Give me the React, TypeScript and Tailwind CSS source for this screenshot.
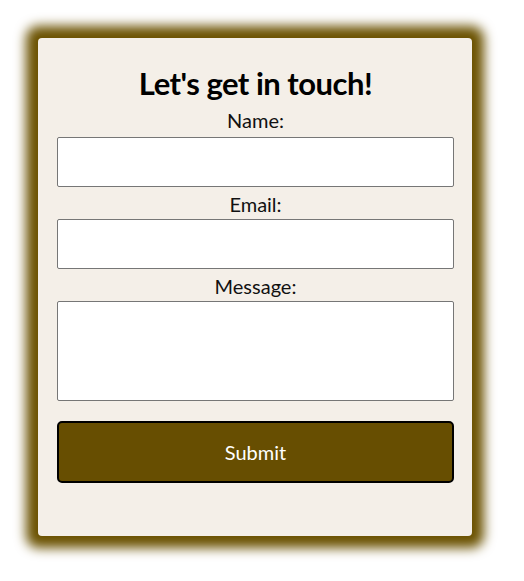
import React from "react";

export default function App() {
  return (
    <div className="min-h-[581px] w-[524px] bg-white pt-[38px] pl-[38px]" style={{ fontFamily: "Lato, 'Noto Sans', sans-serif" }}>
      <div className="flex h-[498px] w-[434px] flex-col rounded-[4px] bg-[#f4efe8] pl-[19px] pr-[18px] pt-[20px] shadow-[0_0_12px_12px_#6b5200]">
        <h1 className="h-[50px] text-center text-[31px] font-bold leading-[50px] tracking-[-0.5px] text-black">Let's get in touch!</h1>
        <form className="flex flex-col" onSubmit={(e) => e.preventDefault()}>
          <label className="block h-[29px] text-center text-[20px] leading-[24px] text-[#111]">Name:</label>
          <input type="text" className="h-[50px] w-full rounded-[2px] border border-[#767676] bg-white" />
          <label className="block h-[32px] pt-[5px] text-center text-[20px] leading-[24px] text-[#111]">Email:</label>
          <input type="email" className="h-[50px] w-full rounded-[2px] border border-[#767676] bg-white" />
          <label className="block h-[32px] pt-[5px] text-center text-[20px] leading-[24px] text-[#111]">Message:</label>
          <textarea className="block h-[100px] w-full resize-none rounded-[2px] border border-[#767676] bg-white" />
          <button type="submit" className="mt-[20px] h-[62px] w-full rounded-[5px] border-2 border-black bg-[#674e01] text-[20px] text-white">Submit</button>
        </form>
      </div>
    </div>
  );
}
